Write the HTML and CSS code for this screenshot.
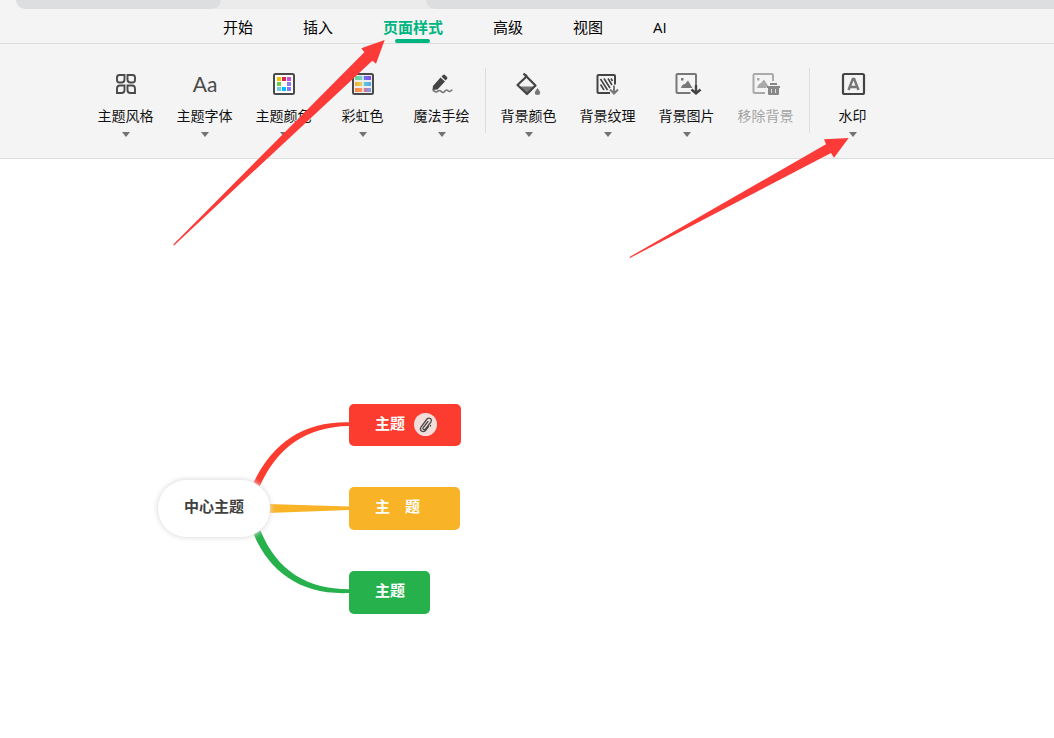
FILE: index.html
```html
<!DOCTYPE html>
<html lang="zh-CN">
<head>
<meta charset="utf-8">
<title>思维导图</title>
<link rel="stylesheet" href="styles.css">
</head>
<body>
<header>
  <div class="strip"><div class="doc-tab"></div><div class="doc-rest"></div></div>
  <nav class="menu">
    <button class="menu-item">开始</button>
    <button class="menu-item">插入</button>
    <button class="menu-item active">页面样式</button>
    <button class="menu-item">高级</button>
    <button class="menu-item">视图</button>
    <button class="menu-item">AI</button>
  </nav>
  <div class="ribbon">
    <button class="tool">
      <svg class="icon" viewBox="0 0 31 32" fill="none" stroke="#4a4a4a" stroke-width="1.900"><path d="M9.500 7h5v4.500q0 3-3 3H9.500Q7 14.500 7 12V9.500Q7 7 9.500 7zM17.500 7h5Q25 7 25 9.500V12q0 2.500-2.500 2.500H20.500Q17.500 14.500 17.500 11.500zM10 17.500H14.500V22Q14.500 25 11.500 25H7V20.500Q7 17.500 10 17.500zM17.500 17.500h4.500Q25 17.500 25 20.500V25H20.500Q17.500 25 17.500 22z"/></svg>
      <span class="label">主题风格</span><span class="caret"></span>
    </button>
    <button class="tool">
      <svg class="icon" viewBox="0 0 31 32"><text class="glyph" x="16" y="24" text-anchor="middle">Aa</text></svg>
      <span class="label">主题字体</span><span class="caret"></span>
    </button>
    <button class="tool">
      <svg class="icon" viewBox="0 0 31 32"><rect x="6" y="6" width="20" height="20" rx="1.500" fill="#fff" stroke="#4a4a4a" stroke-width="2"/><path fill="#f0c400" d="M9 9h4v4H9z"/><path fill="#dc2850" d="M14 9h4v4h-4z"/><path fill="#c850d2" d="M19 9h4v4h-4z"/><path fill="#6ccd46" d="M9 14h4v4H9z"/><path fill="#9678eb" d="M19 14h4v4h-4z"/><path fill="#6ecde1" d="M9 19h4v4H9z"/><path fill="#00beff" d="M14 19h4v4h-4z"/><path fill="#8278ff" d="M19 19h4v4h-4z"/></svg>
      <span class="label">主题颜色</span><span class="caret"></span>
    </button>
    <button class="tool">
      <svg class="icon" viewBox="0 0 31 32"><defs><linearGradient id="g1"><stop stop-color="#62d78f"/><stop offset=".45" stop-color="#74d3c5"/><stop offset=".55" stop-color="#6874f3"/><stop offset="1" stop-color="#8c4be8"/></linearGradient><linearGradient id="g2"><stop stop-color="#f4ad3e"/><stop offset=".45" stop-color="#e2d65a"/><stop offset=".55" stop-color="#61cadd"/><stop offset="1" stop-color="#58a4ef"/></linearGradient><linearGradient id="g3"><stop stop-color="#ff8247"/><stop offset=".45" stop-color="#ff9a58"/><stop offset=".55" stop-color="#d77588"/><stop offset="1" stop-color="#70a0fb"/></linearGradient></defs><rect x="6" y="6" width="20" height="20" rx="1.500" fill="#eee" stroke="#4a4a4a" stroke-width="2"/><path fill="url(#g1)" d="M8 8h16v4H8z"/><path fill="url(#g2)" d="M8 14h16v4H8z"/><path fill="url(#g3)" d="M8 20h16v4H8z"/><path stroke="#eee" stroke-width="1.500" d="M16 8v16"/></svg>
      <span class="label">彩虹色</span><span class="caret"></span>
    </button>
    <button class="tool">
      <svg class="icon" viewBox="0 0 31 32"><path fill="#444" d="M7 18l7.500-8.500 4.500 4-7.500 8-5 .5zM15.500 8.500l1.500-1.500q1-1 2 0l2 2q1 1 0 2l-1.500 1.500z"/><path fill="none" stroke="#777" stroke-width="1.700" d="M6.500 22.500C8 22 8.500 24 10 24S12 22.500 13.500 22.500 15.500 24.500 17 24.500 19 22 20.500 22 22 23.500 23.500 23.500 25 22 26.500 22"/></svg>
      <span class="label">魔法手绘</span><span class="caret"></span>
    </button>
    <span class="divider"></span>
    <button class="tool">
      <svg class="icon" viewBox="0 0 31 32"><path fill="#777" d="M6 18.500h16L14 26z"/><path fill="none" stroke="#444" stroke-width="2.200" stroke-linejoin="round" d="M10.500 5.500l3 3M13.500 8.500L22.500 17.500 14 26 4.500 17zM12 6.500l2 2"/><path fill="#777" d="M24.500 20q5.500 6.500 0 7-5.500-.5 0-7z"/></svg>
      <span class="label">背景颜色</span><span class="caret"></span>
    </button>
    <button class="tool">
      <svg class="icon" viewBox="0 0 31 32" fill="none"><path stroke="#444" stroke-width="2" d="M18 25H6.500Q5.500 25 5.500 24V8q0-1 1-1H22q1 0 1 1v8.500"/><path stroke="#444" stroke-width="1.600" d="M8.500 11l7 11M8.500 16.500l3.500 5.500M12 10.500l6 9.500M16 10.500l4 6.500M19 10.500l1.500 2.500"/><path stroke="#777" stroke-width="2" d="M22 17.500v8M18 21.500l4 4 4-4"/></svg>
      <span class="label">背景纹理</span><span class="caret"></span>
    </button>
    <button class="tool">
      <svg class="icon" viewBox="0 0 31 32" fill="none"><path stroke="#777" stroke-width="2" d="M19.500 25H6.500Q5.500 25 5.500 24V7q0-1 1-1H24q1 0 1 1v12"/><path fill="#777" d="M10 20q1-4 4-4l3-3.500 4.500 7.500zM10 10h2.500v2.500H10z"/><path stroke="#444" stroke-width="2.400" d="M25 17v8.500M20.500 21.500l4.500 4 4.500-4"/></svg>
      <span class="label">背景图片</span><span class="caret"></span>
    </button>
    <button class="tool" disabled>
      <svg class="icon" viewBox="0 0 31 32" fill="none"><path stroke="#aaa" stroke-width="2" d="M15 25H4.500Q3.500 25 3.500 24V7q0-1 1-1H22q1 0 1 1v6"/><path fill="#aaa" d="M7 20q1-4 4-5l3-3.500 4 6-2 2.500zM7 10h2.500v2.500H7z"/><path fill="#888" d="M20 15h7v2h-7zM17 18h13v2H17zM18 20h11v6q0 1-1 1h-9q-1 0-1-1z"/><path stroke="#ddd" d="M21.500 21v4M25.500 21v4"/></svg>
      <span class="label">移除背景</span>
    </button>
    <span class="divider"></span>
    <button class="tool">
      <svg class="icon" viewBox="0 0 31 32" fill="none"><rect x="6" y="6" width="21" height="20" rx="1.500" stroke="#444" stroke-width="2.200"/><path stroke="#777" stroke-width="2.400" d="M11.500 22l4.300-11h1.400L21.500 22M13 19h7"/></svg>
      <span class="label">水印</span><span class="caret"></span>
    </button>
  </div>
</header>
<main class="canvas">
  <svg class="links" viewBox="0 159 400 500">
    <path fill="#fb3c2e" d="M253.700 482.300Q283 421 349 422.300V426Q286 427 259.700 486.300z"/>
    <path fill="#f8b327" d="M268 504L349 506.500V510L268 513z"/>
    <path fill="#26b14c" d="M253.700 534.300C270 573 302 595 349 593V589.300C307 589 277 571 260.300 530.300z"/>
  </svg>
  <div class="node root">中心主题</div>
  <div class="node red">主题
    <svg class="clip" viewBox="0 0 23 23"><circle cx="11.500" cy="11.500" r="11.500" fill="#f3dedb"/><path fill="none" stroke="#4a4a4a" stroke-width="1.300" stroke-linecap="round" d="M14.500 13.500l-3 4q-2 2-4 .5-2-1.500-.5-4l6-8q1.500-1.500 3.500-.5 1.500 1.500 .5 3.500l-5.500 7q-1 1-2 .5-1-.8-.3-2L14 8.500M16.500 12.500v.5"/></svg>
  </div>
  <div class="node yellow">主　题</div>
  <div class="node green">主题</div>
</main>
<svg class="arrows" viewBox="0 0 1054 300"><path fill="#fc3a38" d="M384.700 40L361.300 48.300 364.300 52.300 173.300 244.500 174 245.500 372.300 60.700 376 63.700zM848.700 138L824 139.300 826 144.300 629.500 257 630 258 831 153 834 157.700z"/></svg>
</body>
</html>
```
FILE: styles.css
```css
* { box-sizing: border-box; }
body {
  margin: 0;
  min-height: 100vh;
  display: flex;
  flex-direction: column;
  position: relative;
  background: #fff;
  font-family: "Open Sans", "Noto Sans CJK SC", sans-serif;
}
header { background: #f4f4f4; }
button {
  border: 0;
  padding: 0;
  background: none;
  font: inherit;
  color: #111;
}
.strip {
  display: flex;
  justify-content: space-between;
  height: 9px;
  padding-left: 16px;
  background: linear-gradient(90deg, #f4f4f4 200px, #ebebeb 200px);
}
.doc-tab {
  width: 205px;
  background: #dcdee0;
  border-radius: 0 0 9px 9px;
}
.doc-rest {
  flex: 1;
  margin-left: 205px;
  background: #dcdee0;
  border-bottom-left-radius: 9px;
}
.menu {
  display: flex;
  gap: 50px;
  height: 35px;
  padding-left: 223px;
  border-bottom: 1px solid #dcdddd;
}
.menu-item {
  position: relative;
  font-size: 15px;
  line-height: 36px;
  height: 34px;
  color: #000;
  white-space: nowrap;
}
.menu-item.active { color: #00b57f; font-weight: 700; }
.menu-item.active::after {
  content: "";
  position: absolute;
  left: 12px;
  right: 13px;
  bottom: 0;
  height: 4px;
  border-radius: 2px;
  background: #00b57f;
}
.ribbon {
  display: flex;
  height: 115px;
  padding: 24px 0 0 86px;
  border-bottom: 1px solid #dcdddd;
}
.tool {
  display: flex;
  flex: none;
  flex-direction: column;
  align-items: center;
  width: 79px;
  height: 72px;
}
.icon { width: 31px; height: 32px; }
.glyph {
  font-family: Lato, sans-serif;
  font-size: 21px;
  fill: #4a4a4a;
}
.label {
  margin-top: 6px;
  font-size: 14px;
  line-height: 20px;
}
.tool:disabled .label { color: #a4a4a4; }
.caret {
  margin-top: 6px;
  border: 4px solid transparent;
  border-top: 5px solid #737373;
  border-bottom: 0;
}
.divider {
  width: 1px;
  height: 65px;
  margin: 0 3px 0 4px;
  background: #dcdddd;
}
.canvas { position: relative; flex: 1; }
.links {
  position: absolute;
  left: 0;
  top: 0;
  width: 400px;
  height: 500px;
}
.node {
  position: absolute;
  left: 349px;
  display: flex;
  align-items: center;
  height: 43px;
  padding: 0 25px 6px 26px;
  border-radius: 5px;
  font-size: 15px;
  font-weight: 700;
  color: #fff;
  white-space: nowrap;
}
.root {
  left: 158px;
  top: 321px;
  height: 57px;
  padding: 0 26px 6px;
  border-radius: 29px;
  background: #fff;
  color: #404040;
  box-shadow: 0 0 5px 1px #e2dcdf;
}
.red { top: 245px; height: 42px; padding-right: 24px; background: #fb3c2e; }
.yellow { top: 328px; padding-right: 40px; background: #f8b327; }
.green { top: 412px; background: #26b14c; }
.clip {
  width: 23px;
  height: 23px;
  margin: 5px 0 0 9px;
}
.arrows {
  position: absolute;
  left: 0;
  top: 0;
  width: 1054px;
  height: 300px;
  pointer-events: none;
}
```
